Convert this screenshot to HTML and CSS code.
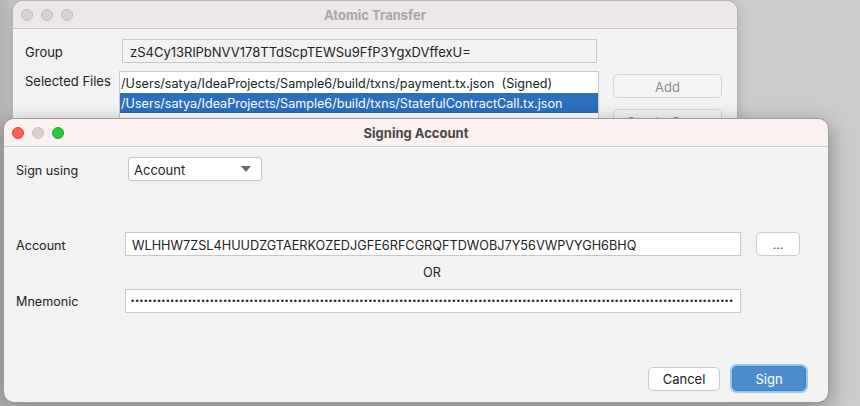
FILE: index.html
```html
<!DOCTYPE html>
<html>
<head>
<meta charset="utf-8">
<link rel="stylesheet" href="styles.css">
</head>
<body>
<div class="desktop">
  <div class="window back">
    <div class="titlebar">
      <div class="lights">
        <span class="light off"></span><span class="light off"></span><span class="light off"></span>
      </div>
      <div class="title inactive">Atomic Transfer</div>
    </div>
    <div class="back-body">
      <div class="row group-row">
        <div class="lbl">Group</div>
        <div class="field readonly group-field">zS4Cy13RlPbNVV178TTdScpTEWSu9FfP3YgxDVffexU=</div>
      </div>
      <div class="row files-row">
        <div class="lbl">Selected Files</div>
        <div class="list">
          <div class="item">/Users/satya/IdeaProjects/Sample6/build/txns/payment.tx.json&nbsp; (Signed)</div>
          <div class="item sel">/Users/satya/IdeaProjects/Sample6/build/txns/StatefulContractCall.tx.json</div>
        </div>
        <div class="side-btns">
          <div class="btn disabled">Add</div>
          <div class="btn disabled">Create Group</div>
        </div>
      </div>
    </div>
  </div>

  <div class="window front">
    <div class="titlebar">
      <div class="lights">
        <span class="light red"></span><span class="light grey"></span><span class="light green"></span>
      </div>
      <div class="title">Signing Account</div>
    </div>
    <div class="front-body">
      <div class="row sign-row">
        <div class="lbl wide">Sign using</div>
        <div class="combo"><span>Account</span><span class="arrow"></span></div>
      </div>
      <div class="row acct-row">
        <div class="lbl narrow">Account</div>
        <div class="field acct-field">WLHHW7ZSL4HUUDZGTAERKOZEDJGFE6RFCGRQFTDWOBJ7Y56VWPVYGH6BHQ</div>
        <div class="btn small">...</div>
      </div>
      <div class="or">OR</div>
      <div class="row mn-row">
        <div class="lbl narrow">Mnemonic</div>
        <div class="field pw"><span class="dots">•••••••••••••••••••••••••••••••••••••••••••••••••••••••••••••••••••••••••••••••••••••••••••••••••••••••••••••••••••••••••••••••••••••••••</span></div>
      </div>
      <div class="actions">
        <div class="btn cancel">Cancel</div>
        <div class="btn primary">Sign</div>
      </div>
    </div>
  </div>
</div>
</body>
</html>
```

FILE: styles.css
```css
* { box-sizing: border-box; }
html, body { margin: 0; padding: 0; }
body {
  width: 860px;
  height: 406px;
  overflow: hidden;
  background: #cbcbcb;
  font-family: "Inter", "Liberation Sans", Arial, sans-serif;
  font-size: 12.6px;
  color: #222;
}
.desktop {
  position: relative;
  width: 860px;
  height: 406px;
  background: linear-gradient(90deg, #b4b4b4 0px, #c4c4c4 12px, #cbcbcb 40px);
}
.window {
  position: absolute;
  background: #f2f2f2;
  border-radius: 10px;
  overflow: hidden;
}
.back {
  left: 13px;
  top: 1px;
  width: 724px;
  height: 390px;
  box-shadow: 0 0 0 1px #b6b6b6, 0 4px 14px rgba(0,0,0,0.18);
}
.front {
  left: 4px;
  top: 119px;
  width: 824px;
  height: 283px;
  box-shadow: 0 0 0 1px #9c9c9c, 0 6px 22px rgba(0,0,0,0.38);
}
.titlebar {
  position: relative;
  height: 28px;
  border-bottom: 1px solid #c9c4c4;
  display: flex;
  align-items: center;
  justify-content: center;
  padding-top: 1px;
}
.back .titlebar { background: #ede7e7; }
.front .titlebar { background: #fbf1f0; border-bottom-color: #cfc9c8; }
.lights {
  position: absolute;
  left: 8px;
  top: 8px;
  display: flex;
  gap: 8px;
}
.light {
  width: 12px;
  height: 12px;
  border-radius: 50%;
  display: block;
}
.light.off { background: #d6d1d1; border: 1px solid #c2bdbd; }
.light.red { background: #fe5f57; border: 1px solid #e2463f; }
.light.grey { background: #d8d2d2; border: 1px solid #c5bfbf; }
.light.green { background: #28c840; border: 1px solid #1aab29; }
.title {
  font-weight: bold;
  font-size: 13px;
  color: #4a4747;
}
.title.inactive { color: #aaa6a6; }

.row { display: flex; align-items: center; }
.lbl { color: #222; padding-top: 2px; }

.back-body { padding: 10px 0 0 12px; }
.group-row { height: 24px; }
.group-row .lbl { width: 97px; font-size: 13px; }
.field {
  height: 24px;
  border: 1px solid #c8c8c8;
  background: #fff;
  padding: 2px 7px 0;
  display: flex;
  align-items: center;
  white-space: nowrap;
  overflow: hidden;
}
.field.readonly { background: #f2f2f2; color: #222; }
.group-field { width: 475px; padding-left: 7px; font-size: 13px; }
.files-row { margin-top: 8px; align-items: flex-start; }
.files-row .lbl { width: 94px; margin-top: 0px; font-size: 13px; }
.list {
  width: 480px;
  height: 80px;
  background: #fff;
  border: 1px solid #c8c8c8;
  padding-top: 1px;
}
.item {
  height: 20px;
  line-height: 21px;
  padding-left: 1px;
  white-space: nowrap;
}
.item.sel { background: #2b6fbd; color: #fff; }
.side-btns {
  margin-left: 14px;
  margin-top: 3px;
  display: flex;
  flex-direction: column;
  gap: 11px;
}
.btn {
  height: 24px;
  border-radius: 5px;
  border: 1px solid #c8c8c8;
  background: #fff;
  display: flex;
  align-items: center;
  justify-content: center;
  color: #222;
  white-space: nowrap;
  padding-top: 1px;
}
.btn.disabled {
  width: 109px;
  background: #f3f3f3;
  border-color: #d3d3d3;
  color: #8e8e8e;
  font-size: 13px;
}

.front-body { padding: 10px 0 0 12px; position: relative; height: 254px; }
.sign-row { height: 24px; }
.lbl.wide { width: 112px; }
.lbl.narrow { width: 109px; }
.combo {
  width: 134px;
  height: 24px;
  background: #fff;
  border: 1px solid #c5c5c5;
  border-radius: 3px;
  display: flex;
  align-items: center;
  justify-content: space-between;
  padding: 2px 10px 0 5px;
  font-size: 13px;
}
.arrow {
  width: 0;
  height: 0;
  border-left: 5px solid transparent;
  border-right: 5px solid transparent;
  border-top: 6px solid #6a6a6a;
  margin-top: -2px;
}
.acct-row { margin-top: 51px; height: 24px; }
.acct-field { width: 616px; padding-left: 6px; font-size: 12.7px; }
.btn.small {
  width: 44px;
  margin-left: 15px;
  color: #333;
  font-size: 12px;
  border-color: #cacaca;
}
.or {
  height: 33px;
  line-height: 34px;
  padding-left: 407px;
}
.mn-row { height: 24px; }
.mn-row .lbl { padding-top: 0; }
.mn-row .field { width: 616px; padding-left: 5px; padding-top: 0; }
.dots {
  font-family: "Liberation Sans", Arial, sans-serif;
  font-size: 9px;
  letter-spacing: 1.25px;
  color: #222;
}
.actions {
  position: absolute;
  right: 22px;
  bottom: 10px;
  display: flex;
  align-items: center;
  gap: 12px;
}
.btn.cancel { width: 72px; height: 24px; font-size: 13px; }
.btn.primary {
  width: 74px;
  height: 25px;
  background: #4d8dcc;
  border: 1px solid #3f7fc0;
  color: #fff;
  font-size: 13px;
  box-shadow: 0 0 0 2px #9cc6f4;
}
```
